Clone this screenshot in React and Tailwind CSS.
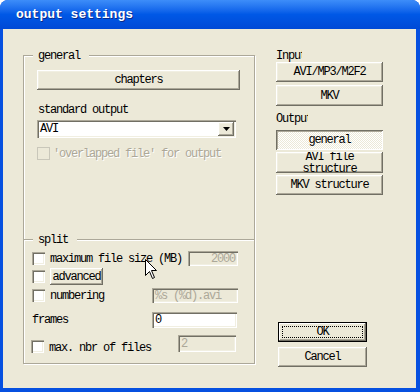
import React from 'react';

// classic win32 control looks
const raised =
  'bg-[#ECE9D8] shadow-[inset_-1px_-1px_0_#716F64,inset_1px_1px_0_#FFFFFF,inset_-2px_-2px_0_#ACA899,inset_2px_2px_0_#F1EFE2]';
const sunken =
  'shadow-[inset_1px_1px_0_#ACA899,inset_2px_2px_0_#716F64,inset_-1px_-1px_0_#FFFFFF,inset_-2px_-2px_0_#F1EFE2]';
const mono = 'font-mono text-[12px] leading-[12px] tracking-[-1.2px]';

const Button = ({ className = '', children }) => (
  <div className={`${raised} flex items-center justify-center text-black ${className}`}>
    <span>{children}</span>
  </div>
);

const Checkbox = ({ disabled, className = '' }) => (
  <div
    className={`w-[13px] h-[13px] shrink-0 ${sunken} ${disabled ? 'bg-[#ECE9D8]' : 'bg-white'} ${className}`}
  />
);

const TextBox = ({ value, disabled, right, className = '' }) => (
  <div
    className={`${sunken} flex items-center px-[3px] ${disabled ? 'bg-[#ECE9D8] text-[#ACA899]' : 'bg-white text-black'} ${
      right ? 'justify-end' : ''
    } ${className}`}
  >
    {value}
  </div>
);

const GroupLabel = ({ children }) => (
  <div className="-mt-[6px] ml-[9px] self-start pl-[5px] pr-[9px] bg-[#ECE9D8] h-[12px]">{children}</div>
);

export default function App() {
  return (
    <div className={`relative w-[420px] h-[392px] bg-white ${mono}`}>
      <div className="flex h-full flex-col rounded-t-[8px] overflow-hidden bg-[#0650E0]">
        {/* Title bar */}
        <div className="h-[29px] shrink-0 flex items-center pl-[16px] bg-gradient-to-b from-[#3D8DF9] via-[#0058E6] to-[#0049D6]">
          <span className="font-bold text-[13px] tracking-normal text-white [text-shadow:1px_1px_0_#0A2A8A]">
            output settings
          </span>
        </div>

        {/* Client */}
        <div className="flex-1 ml-[3px] mr-[4px] mb-[4px] bg-[#ECE9D8] flex items-start">
          {/* Left group box */}
          <div className="ml-[20px] mt-[26px] w-[232px] h-[309px] border border-[#ACA899] shadow-[1px_1px_0_#FFFFFF,inset_1px_1px_0_#FFFFFF] flex flex-col">
            {/* general */}
            <div className="h-[183px] shrink-0 flex flex-col">
              <GroupLabel>general</GroupLabel>
              <Button className="mt-[8px] ml-[13px] w-[203px] h-[20px]">chapters</Button>
              <div className="mt-[14px] ml-[14px]">standard output</div>
              <div className={`mt-[4px] ml-[13px] w-[199px] h-[18px] bg-white ${sunken} flex items-center pl-[3px] pr-[2px]`}>
                <span className="flex-1">AVI</span>
                <div className={`${raised} w-[16px] h-[14px] flex items-center justify-center`}>
                  <svg width="7" height="4" viewBox="0 0 7 4">
                    <polygon points="0,0 7,0 3.5,4" fill="#000" />
                  </svg>
                </div>
              </div>
              <div className="mt-[9px] ml-[13px] flex items-center text-[#ACA899]">
                <div className="w-[13px] h-[13px] border border-[#C9C7BA] bg-[#ECE9D8]" />
                <span className="ml-[3px] [text-shadow:1px_1px_0_#FFFFFF]">'overlapped file' for output</span>
              </div>
            </div>

            {/* split */}
            <div className="flex-1 border-t border-[#ACA899] shadow-[inset_0_1px_0_#FFFFFF] flex flex-col">
              <GroupLabel>split</GroupLabel>
              <div className="mt-[5px] ml-[8px] mr-[16px] h-[15px] flex items-center">
                <Checkbox />
                <span className="ml-[5px]">maximum file size (MB)</span>
                <TextBox disabled right value="2000" className="ml-auto w-[50px] h-[15px]" />
              </div>
              <div className="mt-[2px] ml-[8px] h-[17px] flex items-center">
                <Checkbox />
                <Button className="ml-[5px] w-[53px] h-[17px]">advanced</Button>
              </div>
              <div className="mt-[3px] ml-[8px] mr-[16px] h-[15px] flex items-center">
                <Checkbox />
                <span className="ml-[5px]">numbering</span>
                <TextBox disabled value="%s (%d).avi" className="ml-auto w-[86px] h-[15px]" />
              </div>
              <div className="mt-[9px] ml-[8px] mr-[17px] h-[16px] flex items-center">
                <span>frames</span>
                <TextBox value="0" className="ml-auto w-[85px] h-[16px]" />
              </div>
              <div className="mt-[7px] ml-[7px] mr-[18px] h-[19px] flex items-end">
                <Checkbox className="mb-[1px]" />
                <span className="ml-[5px]">max. nbr of files</span>
                <TextBox disabled value="2" className="ml-auto self-start w-[58px] h-[17px]" />
              </div>
            </div>
          </div>

          {/* Right column */}
          <div className="ml-[21px] mt-[21px] w-[107px] flex flex-col">
            <div className="w-[26px] h-[12px] overflow-hidden whitespace-nowrap">Input</div>
            <Button className="w-[107px] h-[20px]">AVI/MP3/M2F2</Button>
            <Button className="mt-[3px] w-[107px] h-[21px]">MKV</Button>
            <div className="mt-[7px] w-[32px] h-[12px] overflow-hidden whitespace-nowrap">Output</div>
            <div className="mt-[5px] w-[107px] h-[20px] flex items-center justify-center bg-[repeating-conic-gradient(#FFFFFF_0_25%,#ECE9D8_0_50%)] bg-[length:2px_2px] shadow-[inset_1px_1px_0_#716F64,inset_-1px_-1px_0_#FFFFFF,inset_2px_2px_0_#ACA899]">
              general
            </div>
            <div className={`mt-[2px] w-[107px] h-[21px] ${raised} overflow-hidden flex flex-col items-center justify-center`}>
              <span className="block">AVI file</span>
              <span className="block">structure</span>
            </div>
            <Button className="mt-[2px] w-[107px] h-[20px]">MKV structure</Button>

            <div className="mt-[127px] ml-[2px] w-[89px] h-[20px] border border-black bg-[#ECE9D8] shadow-[inset_-1px_-1px_0_#716F64,inset_1px_1px_0_#FFFFFF,inset_-2px_-2px_0_#ACA899] p-[3px]">
              <div className="h-full border border-dotted border-black flex items-center justify-center">OK</div>
            </div>
            <Button className="mt-[5px] ml-[2px] w-[89px] h-[20px]">Cancel</Button>
          </div>
        </div>
      </div>

      {/* mouse pointer */}
      <svg className="absolute left-[145px] top-[259px]" width="13" height="21" viewBox="0 0 13 21">
        <polygon
          points="0.5,0.5 0.5,16.5 4.5,12.5 7.5,19.5 9.5,18.5 6.5,11.5 11.5,11.5"
          fill="#FFFFFF"
          stroke="#000000"
          strokeWidth="1"
        />
      </svg>
    </div>
  );
}
